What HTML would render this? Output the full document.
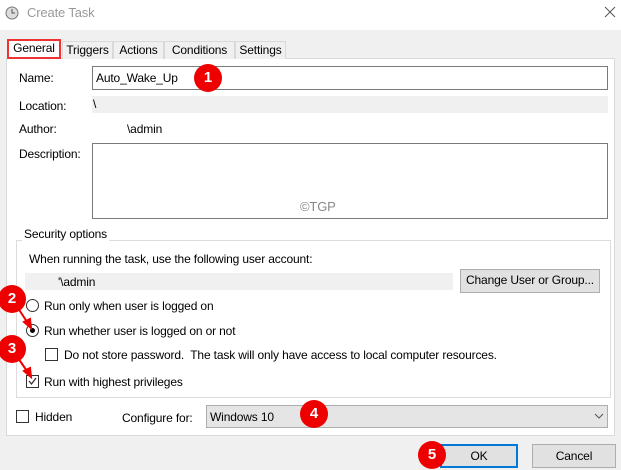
<!DOCTYPE html>
<html><head><meta charset="utf-8"><style>
*{margin:0;padding:0;box-sizing:border-box}
body{width:621px;height:470px;background:#f0f0f0;font-family:"Liberation Sans",sans-serif;font-size:12px;color:#000;position:relative;overflow:hidden;letter-spacing:-0.15px}
.a{position:absolute}
.t{position:absolute;white-space:nowrap;line-height:14px}
.tab{position:absolute;top:41px;height:18px;border:1px solid #d9d9d9;border-bottom:none;background:#f0f0f0;text-align:center;line-height:16px}
.badge{position:absolute;width:28px;height:28px;border-radius:50%;background:#e00;color:#fff;font-weight:bold;font-size:15px;text-align:center;line-height:28px}
.cb{position:absolute;width:13px;height:13px;border:1px solid #333;background:#fff}
.rb{position:absolute;width:13px;height:13px;border:1px solid #333;border-radius:50%;background:#fff}
.btn{position:absolute;background:#e1e1e1;border:1px solid #adadad;text-align:center}
</style></head><body>
<div class="a" style="left:0;top:0;width:621px;height:30px;background:#fff"></div>
<svg class="a" style="left:5px;top:6px" width="14" height="14"><circle cx="7" cy="7" r="6" fill="#ddd" stroke="#777"/><path d="M7 3V7H10" stroke="#555" fill="none"/></svg>
<div class="t" style="left:27px;top:6px;color:#999;font-size:13px">Create Task</div>
<svg class="a" style="left:604px;top:6px" width="12" height="12"><path d="M1 1L11 11M11 1L1 11" stroke="#555" stroke-width="1"/></svg>

<div class="a" style="left:6px;top:58px;width:609px;height:378px;background:#fff;border:1px solid #d9d9d9"></div>
<div class="tab" style="left:62px;width:51px">Triggers</div>
<div class="tab" style="left:113px;width:51px">Actions</div>
<div class="tab" style="left:164px;width:71px">Conditions</div>
<div class="tab" style="left:235px;width:51px">Settings</div>
<div class="tab" style="left:7px;top:39px;width:54px;height:20px;background:#fff;border:2px solid #e33;line-height:15px">General</div>

<div class="t" style="left:19px;top:71px">Name:</div>
<div class="a" style="left:92px;top:66px;width:516px;height:24px;border:1px solid #7a7a7a;background:#fff"></div>
<div class="t" style="left:96px;top:71px">Auto_Wake_Up</div>
<div class="t" style="left:19px;top:99px">Location:</div>
<div class="a" style="left:92px;top:96px;width:516px;height:17px;background:#f0f0f0"></div>
<div class="t" style="left:93px;top:97px">\</div>
<div class="t" style="left:19px;top:122px">Author:</div>
<div class="t" style="left:127px;top:122px">\admin</div>
<div class="t" style="left:19px;top:147px">Description:</div>
<div class="a" style="left:92px;top:143px;width:516px;height:76px;border:1px solid #7a7a7a;background:#fff"></div>
<div class="t" style="left:300px;top:200px;color:#888;font-size:13px">©TGP</div>

<div class="a" style="left:16px;top:240px;width:595px;height:158px;border:1px solid #dcdcdc"></div>
<div class="t" style="left:22px;top:227px;background:#fff;padding:0 2px">Security options</div>
<div class="t" style="left:29px;top:252px">When running the task, use the following user account:</div>
<div class="a" style="left:25px;top:273px;width:428px;height:17px;background:#f0f0f0"></div>
<div class="t" style="left:58px;top:275px">'\admin</div>
<div class="btn" style="left:460px;top:269px;width:140px;height:24px;line-height:21px">Change User or Group...</div>

<div class="rb" style="left:26px;top:299px"></div>
<div class="t" style="left:44px;top:299px">Run only when user is logged on</div>
<div class="rb" style="left:26px;top:324px"></div>
<div class="a" style="left:30px;top:328px;width:5px;height:5px;border-radius:50%;background:#000"></div>
<div class="t" style="left:44px;top:324px">Run whether user is logged on or not</div>
<div class="cb" style="left:45px;top:348px"></div>
<div class="t" style="left:64px;top:348px">Do not store password.&nbsp; The task will only have access to local computer resources.</div>
<div class="cb" style="left:26px;top:375px"></div>
<svg class="a" style="left:26px;top:375px" width="13" height="13"><path d="M3 6L5.5 9L10 3" stroke="#333" fill="none" stroke-width="1.3"/></svg>
<div class="t" style="left:44px;top:375px">Run with highest privileges</div>

<div class="cb" style="left:16px;top:410px"></div>
<div class="t" style="left:35px;top:410px">Hidden</div>
<div class="t" style="left:122px;top:411px">Configure for:</div>
<div class="a" style="left:206px;top:405px;width:402px;height:23px;background:#e5e5e5;border:1px solid #adadad"></div>
<div class="t" style="left:210px;top:410px">Windows 10</div>
<svg class="a" style="left:594px;top:413px" width="10" height="6"><path d="M1 1L5 5L9 1" stroke="#555" fill="none"/></svg>

<div class="btn" style="left:440px;top:444px;width:78px;height:24px;border:2px solid #0078d7;line-height:20px">OK</div>
<div class="btn" style="left:532px;top:444px;width:84px;height:24px;line-height:22px">Cancel</div>

<svg class="a" style="left:0;top:0" width="621" height="470"><g stroke="#e00" fill="#e00" stroke-width="2"><path d="M18 308L29 325" /><path d="M31 328L24 322L30 319Z"/><path d="M18 358L29 374"/><path d="M31 377L24 371L30 368Z"/></g></svg>
<div class="badge" style="left:194px;top:64px">1</div>
<div class="badge" style="left:-2px;top:285px">2</div>
<div class="badge" style="left:-2px;top:335px">3</div>
<div class="badge" style="left:300px;top:400px">4</div>
<div class="badge" style="left:418px;top:441px">5</div>
</body></html>
